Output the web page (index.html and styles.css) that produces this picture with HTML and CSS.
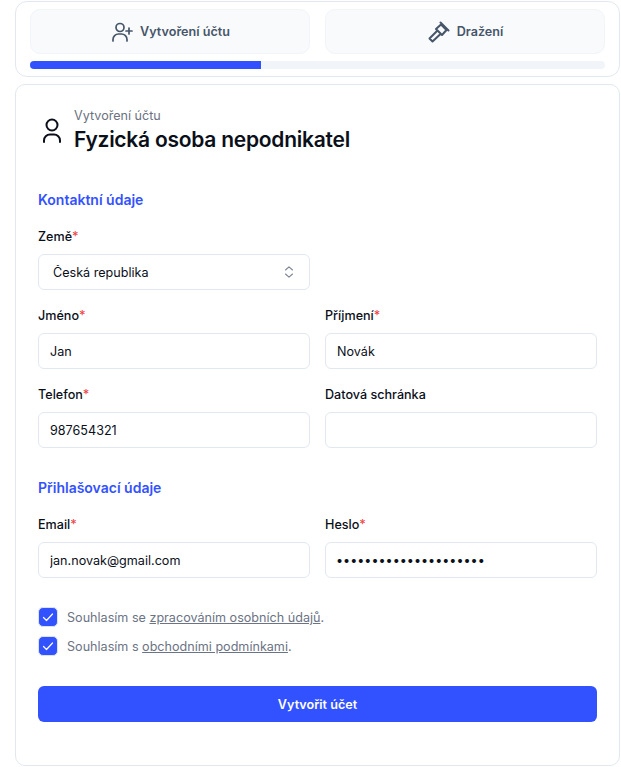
FILE: index.html
```html
<!DOCTYPE html>
<html lang="en">
<head>
    <meta charset="UTF-8">
    <meta name="viewport" content="width=device-width, initial-scale=1.0">
    <title>Vytvoření účtu</title>
    <link rel="stylesheet" href="styles.css">
</head>
<body>
    <div class="steps">
        <div class="tabs">
            <div class="tab">
                <svg width="24" height="24" viewBox="0 0 24 24" fill="none" stroke="currentColor" stroke-width="1.7" stroke-linecap="round" stroke-linejoin="round"><path d="M3 21v-1.500a5.500 5.500 0 0 1 5.500-5.500h3a5.500 5.500 0 0 1 5.500 5.500V21"/><circle cx="10" cy="7.500" r="4"/><path d="M19 8v6M16 11h6"/></svg>
                <span>Vytvoření účtu</span>
            </div>
            <div class="tab">
                <svg width="24" height="24" viewBox="0 0 24 24" fill="none" stroke="currentColor" stroke-width="2" stroke-linecap="round" stroke-linejoin="round"><path d="M13.500 2.500l8 8M9 9l5-4.500 5.500 5.500-4.500 5zM10 11l-7.500 7.500 3 3 8-7.500"/></svg>
                <span>Dražení</span>
            </div>
        </div>
        <div class="progress"><div class="progress-fill"></div></div>
    </div>

    <form class="card">
        <div class="head">
            <svg width="24" height="28" viewBox="0 0 24 28" fill="none" stroke="#0b0f19" stroke-width="2" stroke-linecap="round" stroke-linejoin="round"><circle cx="12" cy="8" r="5.500"/><path d="M4 25v-1.500a6 6 0 0 1 6-6h4a6 6 0 0 1 6 6V25"/></svg>
            <div>
                <p class="head-sub">Vytvoření účtu</p>
                <h1>Fyzická osoba nepodnikatel</h1>
            </div>
        </div>

        <h2 class="first">Kontaktní údaje</h2>
        <div class="grid">
            <div class="field">
                <label>Země<i>*</i></label>
                <div class="select-wrap">
                    <select><option>Česká republika</option></select>
                    <svg width="12" height="14" viewBox="0 0 12 14" fill="none" stroke="#7b8494" stroke-width="1.100" stroke-linecap="round" stroke-linejoin="round"><path d="M2.500 5L6 1.800 9.500 5M2.500 9L6 12.200 9.500 9"/></svg>
                </div>
            </div>
            <div></div>
            <div class="field">
                <label>Jméno<i>*</i></label>
                <input type="text" value="Jan">
            </div>
            <div class="field">
                <label>Příjmení<i>*</i></label>
                <input type="text" value="Novák">
            </div>
            <div class="field">
                <label>Telefon<i>*</i></label>
                <input type="text" value="987654321">
            </div>
            <div class="field">
                <label>Datová schránka</label>
                <input type="text">
            </div>
        </div>

        <h2>Přihlašovací údaje</h2>
        <div class="grid">
            <div class="field">
                <label>Email<i>*</i></label>
                <input type="text" value="jan.novak@gmail.com">
            </div>
            <div class="field">
                <label>Heslo<i>*</i></label>
                <input class="password" type="password" value="heslo12345heslo123456">
            </div>
        </div>

        <div class="agree">
            <div class="check">
                <span class="box"><svg width="14" height="14" viewBox="0 0 14 14" fill="none" stroke="#fff" stroke-width="1.200" stroke-linecap="round" stroke-linejoin="round"><path d="M2.500 7.500l3 3 6-6.500"/></svg></span>
                <span>Souhlasím se <a href="#">zpracováním osobních údajů</a>.</span>
            </div>
            <div class="check">
                <span class="box"><svg width="14" height="14" viewBox="0 0 14 14" fill="none" stroke="#fff" stroke-width="1.200" stroke-linecap="round" stroke-linejoin="round"><path d="M2.500 7.500l3 3 6-6.500"/></svg></span>
                <span>Souhlasím s <a href="#">obchodními podmínkami</a>.</span>
            </div>
        </div>

        <button type="submit">Vytvořit účet</button>
    </form>
</body>
</html>
```

FILE: styles.css
```css
* {
    margin: 0;
    padding: 0;
    box-sizing: border-box;
}
body {
    padding: 1px 1px 0 15px;
    background: #fff;
    font-family: Inter, "Liberation Sans", sans-serif;
    color: #0b0f19;
}
.steps {
    height: 76px;
    padding: 7px 14px 0;
    border: 1px solid #e2e8f0;
    border-radius: 12px;
}
.tabs {
    display: grid;
    grid-template-columns: 1fr 1fr;
    gap: 15px;
}
.tab {
    height: 45px;
    display: flex;
    align-items: center;
    justify-content: center;
    gap: 6px;
    background: #f8fafc;
    border: 1px solid #f1f5f9;
    border-radius: 10px;
    color: #475569;
    font-size: 12.600px;
    font-weight: 600;
}
.progress {
    height: 8px;
    margin-top: 7px;
    background: #f1f5f9;
    border-radius: 4px;
    overflow: hidden;
}
.progress-fill {
    width: 40.2%;
    height: 100%;
    background: #3352ff;
}
.card {
    height: 682px;
    margin-top: 7px;
    padding: 23px 22px 0;
    border: 1px solid #e2e8f0;
    border-radius: 10px;
}
.head {
    display: flex;
    align-items: flex-end;
    gap: 10px;
    height: 47px;
}
.head svg {
    margin: 0 0 10px 2px;
}
.head-sub {
    font-size: 12.600px;
    line-height: 16px;
    color: #6b7280;
}
h1 {
    font-size: 21px;
    line-height: 31px;
    font-weight: 600;
    letter-spacing: -0.25px;
}
h2 {
    margin-top: 30px;
    font-size: 14px;
    line-height: 20px;
    font-weight: 600;
    color: #3352ff;
}
h2.first {
    margin-top: 35px;
}
.grid {
    display: grid;
    grid-template-columns: 272px 272px;
    column-gap: 15px;
    row-gap: 17px;
    margin-top: 18px;
}
.field label {
    display: block;
    height: 17px;
    margin-bottom: 9px;
    font-size: 12.600px;
    line-height: 17px;
    font-weight: 500;
}
.field i {
    font-style: normal;
    color: #ef4444;
}
input, select {
    display: block;
    width: 100%;
    height: 36px;
    padding: 0 11px;
    background: #fff;
    border: 1px solid #e2e8f0;
    border-radius: 6px;
    font-family: inherit;
    font-size: 12.600px;
    color: #0b0f19;
    appearance: none;
    outline: none;
}
.password {
    padding-left: 10px;
}
select {
    padding-left: 14px;
}
.select-wrap {
    position: relative;
}
.select-wrap svg {
    position: absolute;
    top: 11px;
    right: 15px;
}
.agree {
    margin-top: 29px;
    display: flex;
    flex-direction: column;
    gap: 9px;
}
.check {
    display: flex;
    align-items: center;
    gap: 9px;
    font-size: 12.600px;
    color: #6b7384;
}
.check a {
    color: #6b7384;
}
.box {
    width: 20px;
    height: 20px;
    display: flex;
    align-items: center;
    justify-content: center;
    background: #3352ff;
    border: 1px solid #dbe2f5;
    border-radius: 5px;
}
button {
    display: block;
    width: 559px;
    height: 36px;
    margin-top: 30px;
    background: #3352ff;
    border: none;
    border-radius: 6px;
    color: #fff;
    font-family: inherit;
    font-size: 12.600px;
    font-weight: 600;
    cursor: pointer;
}
```
